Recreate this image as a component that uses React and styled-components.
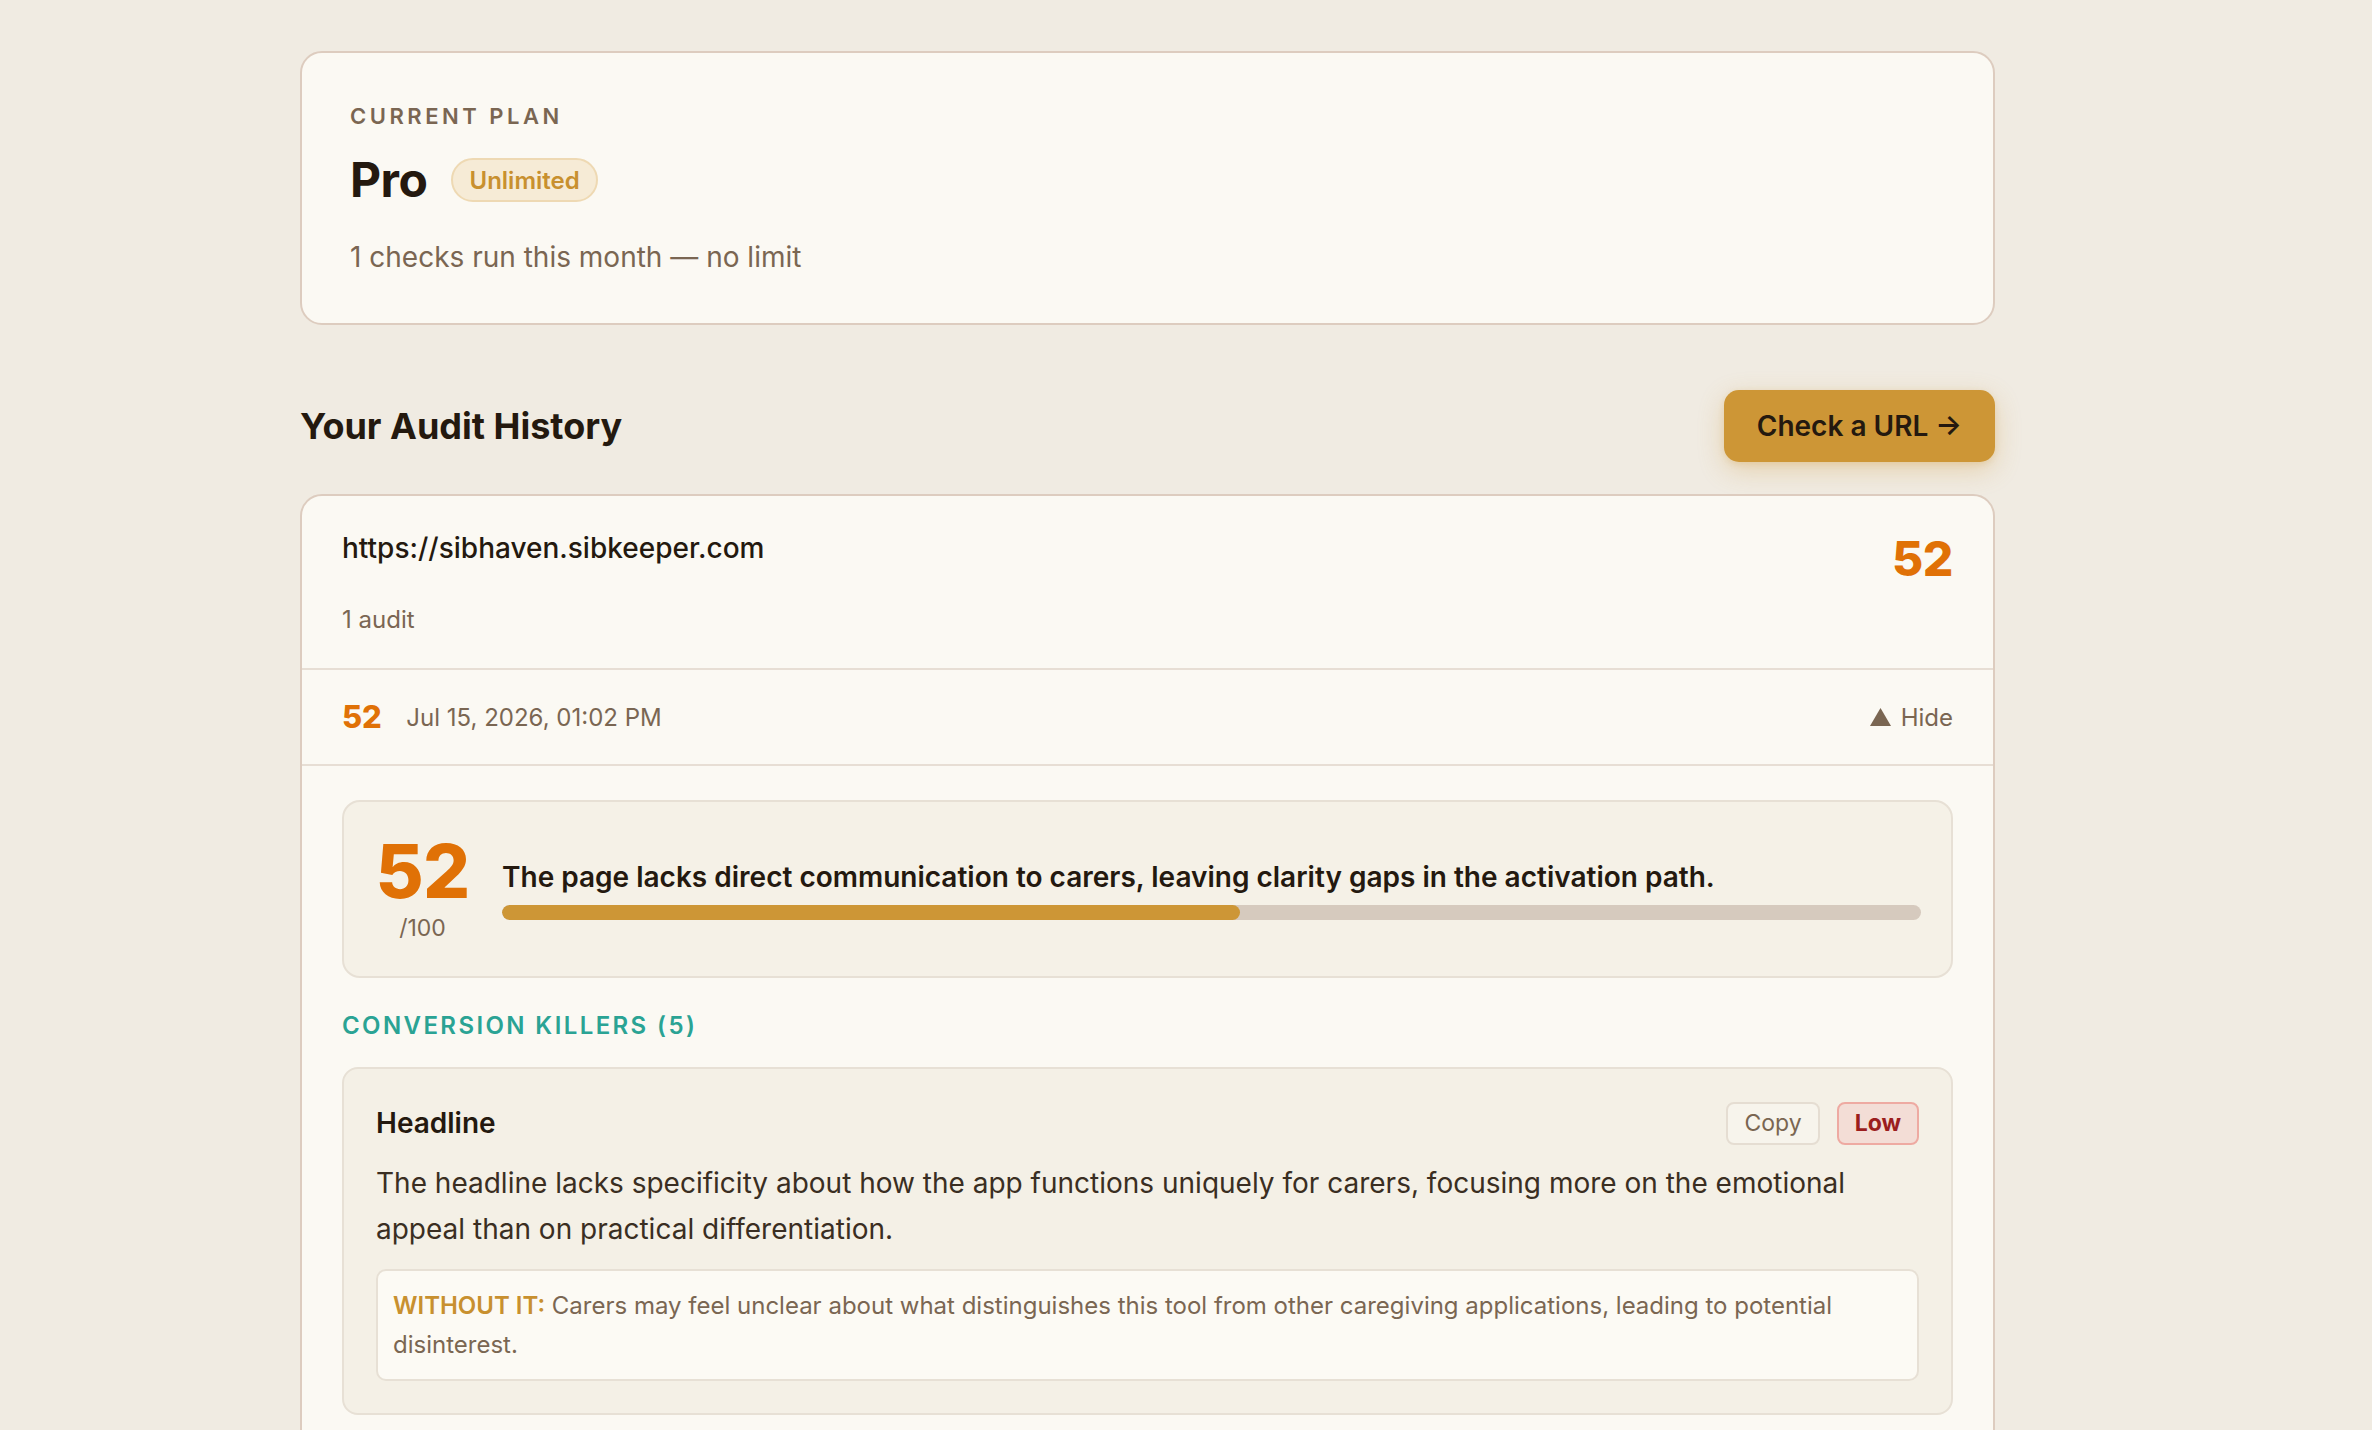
import styled, { createGlobalStyle } from "styled-components";

const GlobalStyle = createGlobalStyle`
  * { box-sizing: border-box; }
  body {
    margin: 0;
    background: #f0ebe2;
    font-family: Inter, "Noto Sans", "Liberation Sans", sans-serif;
    color: #24190f;
  }
`;

const Page = styled.div`
  padding: 51px 0 120px 300px;
`;

const Main = styled.main`
  width: 1695px;
  display: flex;
  flex-direction: column;
`;

const PlanCard = styled.section`
  background: #fbf9f3;
  border: 2px solid #ddccbf;
  border-radius: 22px;
  padding: 48px 48px 46px;
`;

const Eyebrow = styled.div`
  font-size: 22px;
  line-height: 30px;
  font-weight: 600;
  letter-spacing: 0.16em;
  text-transform: uppercase;
  color: #7a6652;
`;

const PlanRow = styled.div`
  display: flex;
  align-items: center;
  gap: 24px;
  margin-top: 20px;
`;

const PlanName = styled.h1`
  margin: 0;
  font-size: 48px;
  line-height: 58px;
  font-weight: 700;
  letter-spacing: -0.01em;
  color: #24190f;
`;

const Pill = styled.span`
  display: inline-flex;
  align-items: center;
  height: 44px;
  padding: 0 16px;
  border: 2px solid #eed9b3;
  background: #f6ebd6;
  border-radius: 999px;
  font-size: 24px;
  font-weight: 600;
  color: #c8902f;
`;

const PlanNote = styled.p`
  margin: 28px 0 0;
  font-size: 28px;
  line-height: 40px;
  color: #7a6652;
`;

const HistoryHead = styled.div`
  display: flex;
  align-items: center;
  justify-content: space-between;
  margin: 65px 0 32px;
`;

const Title = styled.h2`
  margin: 0;
  font-size: 36px;
  line-height: 44px;
  font-weight: 700;
  color: #24190f;
`;

const CheckButton = styled.button`
  height: 72px;
  padding: 0 33px;
  border: none;
  border-radius: 15px;
  background: #cd9636;
  color: #24190f;
  font-family: inherit;
  font-size: 28px;
  font-weight: 600;
  box-shadow: 0 8px 26px rgba(205, 150, 54, 0.3), 0 2px 6px rgba(205, 150, 54, 0.2);
  cursor: pointer;
`;

const HistoryCard = styled.section`
  background: #fbf9f3;
  border: 2px solid #ddccbf;
  border-radius: 22px;
  overflow: hidden;
`;

const SiteHeader = styled.div`
  display: flex;
  justify-content: space-between;
  align-items: flex-start;
  padding: 32px 40px;
  border-bottom: 2px solid #e7ded4;
`;

const SiteUrl = styled.div`
  font-size: 28px;
  line-height: 40px;
  font-weight: 500;
  color: #24190f;
`;

const AuditCount = styled.div`
  margin-top: 35px;
  font-size: 24px;
  line-height: 33px;
  color: #7a6652;
`;

const Score = styled.span`
  font-weight: 800;
  color: #e07106;
  font-size: ${(p) => p.$size}px;
  line-height: ${(p) => p.$line}px;
  letter-spacing: -0.01em;
`;

const SiteScore = styled(Score)`
  margin-top: 2px;
`;

const AuditRow = styled.div`
  display: flex;
  align-items: center;
  height: 96px;
  padding: 0 40px;
  border-bottom: 2px solid #e7ded4;
`;

const RowDate = styled.span`
  margin-left: 25px;
  font-size: 24px;
  color: #7a6652;
`;

const HideButton = styled.button`
  margin-left: auto;
  display: flex;
  align-items: center;
  gap: 10px;
  padding: 0;
  border: none;
  background: none;
  font-family: inherit;
  font-size: 24px;
  color: #7a6652;
  cursor: pointer;
`;

const Details = styled.div`
  padding: 34px 40px 40px;
`;

const ScoreBox = styled.div`
  display: flex;
  align-items: center;
  gap: 34px;
  padding: 32px 30px 32px 33px;
  background: #f5f1e7;
  border: 2px solid #e7e0d5;
  border-radius: 18px;
`;

const ScoreColumn = styled.div`
  display: flex;
  flex-direction: column;
  align-items: center;
  width: 91px;
`;

const OutOf = styled.span`
  margin-top: 4px;
  font-size: 23px;
  line-height: 32px;
  color: #7a6652;
`;

const SummaryColumn = styled.div`
  flex: 1;
`;

const Summary = styled.p`
  margin: 0;
  font-size: 28px;
  line-height: 38px;
  font-weight: 600;
  color: #24190f;
`;

const Bar = styled.div`
  margin-top: 9px;
  height: 15px;
  border-radius: 99px;
  background: #d6cabe;
  overflow: hidden;
`;

const BarFill = styled.div`
  height: 100%;
  border-radius: 99px;
  background: #cd9636;
`;

const SectionLabel = styled.h3`
  margin: 32px 0 25px;
  font-size: 24px;
  line-height: 32px;
  font-weight: 600;
  letter-spacing: 0.1em;
  color: #2aa394;
`;

const KillerCard = styled.article`
  padding: 32px;
  background: #f4f0e6;
  border: 2px solid #e7e0d5;
  border-radius: 16px;
`;

const KillerHead = styled.div`
  display: flex;
  align-items: center;
  justify-content: space-between;
  height: 44px;
`;

const KillerTitle = styled.h4`
  margin: 0;
  font-size: 28px;
  font-weight: 600;
  color: #24190f;
`;

const Actions = styled.div`
  display: flex;
  gap: 17px;
`;

const Tag = styled.span`
  display: inline-flex;
  align-items: center;
  height: 43px;
  padding: 0 16px;
  border-radius: 8px;
  font-size: 23px;
  border: 2px solid ${(p) => (p.$tone === "low" ? "#eeaaa2" : "#e5ddd2")};
  background: ${(p) => (p.$tone === "low" ? "#f3ddd6" : "#f7f4ec")};
  color: ${(p) => (p.$tone === "low" ? "#9b1d1d" : "#7a6652")};
  font-weight: ${(p) => (p.$tone === "low" ? 700 : 400)};
`;

const KillerText = styled.p`
  margin: 15px 0 0;
  font-size: 28px;
  line-height: 46px;
  color: #3a2e22;
`;

const Impact = styled.div`
  margin-top: 17px;
  padding: 15px;
  background: #fcfaf4;
  border: 2px solid #e7e0d5;
  border-radius: 10px;
  font-size: 24px;
  line-height: 39px;
  color: #7a6652;
`;

const ImpactLabel = styled.span`
  font-weight: 600;
  color: #c8902f;
`;

const UpTriangle = () => (
  <svg width="21" height="18" viewBox="0 0 21 18" aria-hidden="true">
    <polygon points="10.5,0 21,18 0,18" fill="#7a6652" />
  </svg>
);

const audit = {
  url: "https://sibhaven.sibkeeper.com",
  score: 52,
  date: "Jul 15, 2026, 01:02 PM",
  summary:
    "The page lacks direct communication to carers, leaving clarity gaps in the activation path.",
};

export default function App() {
  return (
    <>
      <GlobalStyle />
      <Page>
        <Main>
          <PlanCard>
            <Eyebrow>Current Plan</Eyebrow>
            <PlanRow>
              <PlanName>Pro</PlanName>
              <Pill>Unlimited</Pill>
            </PlanRow>
            <PlanNote>1 checks run this month — no limit</PlanNote>
          </PlanCard>

          <HistoryHead>
            <Title>Your Audit History</Title>
            <CheckButton>Check a URL →</CheckButton>
          </HistoryHead>

          <HistoryCard>
            <SiteHeader>
              <div>
                <SiteUrl>{audit.url}</SiteUrl>
                <AuditCount>1 audit</AuditCount>
              </div>
              <SiteScore $size={48} $line={58}>{audit.score}</SiteScore>
            </SiteHeader>

            <AuditRow>
              <Score $size={31} $line={40}>{audit.score}</Score>
              <RowDate>{audit.date}</RowDate>
              <HideButton>
                <UpTriangle />
                Hide
              </HideButton>
            </AuditRow>

            <Details>
              <ScoreBox>
                <ScoreColumn>
                  <Score $size={74} $line={74}>{audit.score}</Score>
                  <OutOf>/100</OutOf>
                </ScoreColumn>
                <SummaryColumn>
                  <Summary>{audit.summary}</Summary>
                  <Bar>
                    <BarFill style={{ width: `${audit.score}%` }} />
                  </Bar>
                </SummaryColumn>
              </ScoreBox>

              <SectionLabel>CONVERSION KILLERS (5)</SectionLabel>

              <KillerCard>
                <KillerHead>
                  <KillerTitle>Headline</KillerTitle>
                  <Actions>
                    <Tag>Copy</Tag>
                    <Tag $tone="low">Low</Tag>
                  </Actions>
                </KillerHead>
                <KillerText>
                  The headline lacks specificity about how the app functions uniquely for carers,
                  focusing more on the emotional appeal than on practical differentiation.
                </KillerText>
                <Impact>
                  <ImpactLabel>WITHOUT IT:</ImpactLabel> Carers may feel unclear about what
                  distinguishes this tool from other caregiving applications, leading to potential
                  disinterest.
                </Impact>
              </KillerCard>
            </Details>
          </HistoryCard>
        </Main>
      </Page>
    </>
  );
}
